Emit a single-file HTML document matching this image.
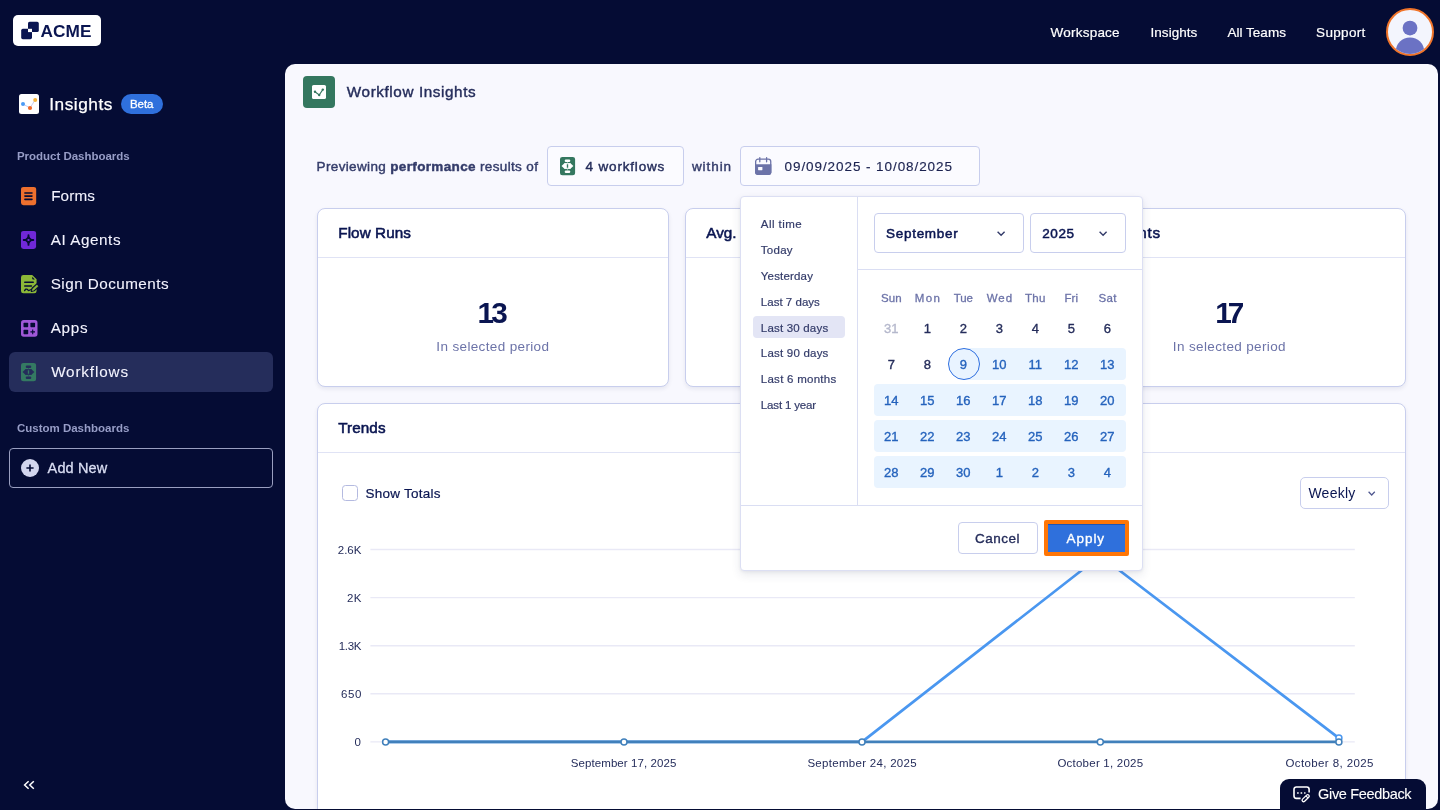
<!DOCTYPE html>
<html lang="en"><head><meta charset="utf-8"><title>Workflow Insights</title>
<style>
*{box-sizing:border-box;margin:0;padding:0}
html,body{width:1440px;height:810px;overflow:hidden;background:#050c34;font-family:"Liberation Sans",sans-serif}
.a{position:absolute}
.t{position:absolute;white-space:nowrap}
.card{position:absolute;background:#fff;border:1px solid #c8ceed;border-radius:8px;box-shadow:0 2px 4px rgba(10,21,81,.08)}
.hl{position:absolute;left:874px;width:252px;height:32px;background:#e9f4ff;border-radius:4px}
.box{position:absolute;border:1px solid #c8ceed;border-radius:4px;background:#fff}
svg{position:absolute;overflow:visible}
</style></head><body>
<div class="a" style="left:0;top:0;width:1440px;height:810px;will-change:transform">
<div class="a" style="left:13px;top:15px;width:88px;height:31px;background:#fff;border-radius:5px"></div>
<svg style="left:0;top:0" width="120" height="60"><rect x="28" y="21.8" width="10.8" height="10.3" rx="1.6" fill="#0a1551"/><rect x="21.2" y="28.8" width="10.8" height="10.4" rx="1.6" fill="#0a1551"/><rect x="28" y="28.8" width="4" height="3.3" fill="#fff"/></svg>
<span class="t" style="left:40.44px;top:20.50px;font-size:17.25px;line-height:21px;font-weight:700;color:#0a1551;letter-spacing:0.088px;">ACME</span>
<span class="t" style="left:1050.62px;top:24.50px;font-size:13.5px;line-height:16px;font-weight:400;color:#fff;-webkit-text-stroke:0.2px #fff;letter-spacing:0.212px;">Workspace</span>
<span class="t" style="left:1150.53px;top:24.50px;font-size:13.5px;line-height:16px;font-weight:400;color:#fff;-webkit-text-stroke:0.2px #fff;letter-spacing:0.036px;">Insights</span>
<span class="t" style="left:1227.53px;top:24.50px;font-size:13.5px;line-height:16px;font-weight:400;color:#fff;-webkit-text-stroke:0.2px #fff;letter-spacing:0.012px;">All Teams</span>
<span class="t" style="left:1316.12px;top:24.50px;font-size:13.5px;line-height:16px;font-weight:400;color:#fff;-webkit-text-stroke:0.2px #fff;letter-spacing:0.314px;">Support</span>
<svg style="left:1386px;top:8px" width="48" height="48" viewBox="0 0 48 48"><defs><clipPath id="av"><circle cx="24" cy="24" r="22"/></clipPath></defs><circle cx="24" cy="24" r="23" fill="#f3f5fd" stroke="#f0742a" stroke-width="2"/><g clip-path="url(#av)" fill="#6b72c4"><circle cx="24" cy="20.1" r="7.4"/><circle cx="24" cy="43.6" r="14.2"/></g></svg>
<svg style="left:19px;top:94px" width="20" height="20" viewBox="0 0 20 20"><rect width="20" height="20" rx="2.5" fill="#fff"/><path d="M4 10 L11 14 L16 6" stroke="#c9cdf0" stroke-width="1" fill="none"/><circle cx="4" cy="10" r="2" fill="#4a9bf5"/><circle cx="11" cy="14" r="2.1" fill="#f06a2b"/><circle cx="16.2" cy="6" r="2" fill="#f5b43a"/></svg>
<span class="t" style="left:49.14px;top:93.50px;font-size:17.25px;line-height:21px;font-weight:400;color:#fff;-webkit-text-stroke:0.25px #fff;letter-spacing:0.558px;">Insights</span>
<div class="a" style="left:121px;top:94px;width:41.5px;height:20px;border-radius:10px;background:#2f70dc"></div>
<span class="t" style="left:130.03px;top:97.00px;font-size:11.5px;line-height:14px;font-weight:400;color:#fff;-webkit-text-stroke:0.3px #fff;letter-spacing:-0.077px;">Beta</span>
<span class="t" style="left:16.93px;top:149.00px;font-size:11.5px;line-height:14px;font-weight:700;color:#979dc6;letter-spacing:-0.022px;">Product Dashboards</span>
<div class="a" style="left:9px;top:352px;width:264px;height:40px;border-radius:6px;background:#252d5b"></div>
<svg style="left:21.1px;top:186.9px" width="15.2" height="18.2" viewBox="0 0 15.2 18.2"><rect width="15.2" height="18.2" rx="2.5" fill="#ee702e"/><g stroke="#050c34" stroke-width="1.6" stroke-linecap="round"><path d="M3.9 5.95h7.1M3.9 9.1h7.1M3.9 12.35h7.1"/></g></svg>
<svg style="left:21.1px;top:231px" width="15.1" height="18.1" viewBox="0 0 15.1 18.1"><rect width="15.1" height="18.1" rx="2.5" fill="#7028d8"/><g stroke="#050c34" stroke-width="1.9" stroke-linecap="round"><path d="M7.5 4.1v9.8M2.7 9h9.6"/></g><path d="M7.5 5.9 Q8.6 7.9 10.6 9 Q8.6 10.1 7.5 12.1 Q6.4 10.1 4.4 9 Q6.4 7.9 7.5 5.9Z" fill="#050c34" stroke="#050c34" stroke-width="1.6" stroke-linejoin="round"/><rect x="6.55" y="8.05" width="1.9" height="1.9" fill="#7028d8"/></svg>
<svg style="left:20.9px;top:274.8px" width="18" height="18.3" viewBox="0 0 18 18.3"><path d="M2.4 0 H11.2 L15.6 4.3 V15.9 A2.4 2.4 0 0 1 13.2 18.3 H2.4 A2.4 2.4 0 0 1 0 15.9 V2.4 A2.4 2.4 0 0 1 2.4 0Z" fill="#8cb838"/><path d="M11.2 1.7 V3.4 A1 1 0 0 0 12.2 4.4 H13.9Z" fill="#050c34"/><g stroke="#050c34" stroke-width="1.6" fill="none" stroke-linecap="round"><path d="M3.8 7.2h8.4M3.8 11h6.6"/><path d="M3.6 15.6 c1 -1.4 1.8 -1.9 2.6 -1.3 s0.9 1.6 1.9 1.2 s1.3 -1 2.2 -0.8" stroke-width="1.3"/></g><path d="M10.4 16.4 L11.2 13.3 L15.9 9 L18 11.3 L13.3 15.6Z" fill="#050c34" stroke="#050c34" stroke-width="1.4" stroke-linejoin="round"/><path d="M11.2 15.7 L11.8 13.8 L15.9 10 L17 11.3 L12.9 15.1Z" fill="#8cb838" stroke="#8cb838" stroke-width=".6" stroke-linejoin="round"/></svg>
<svg style="left:20.5px;top:319.5px" width="16.5" height="16.8" viewBox="0 0 16.5 16.8"><rect width="16.5" height="16.8" rx="2.7" fill="#a058d8"/><g fill="#050c34"><rect x="2.5" y="2.8" width="4.7" height="4.5" rx=".7"/><rect x="9.4" y="2.8" width="4.7" height="4.5" rx=".7"/><rect x="2.5" y="9.7" width="4.7" height="4.5" rx=".7"/></g><path d="M11.7 9.6v4.6M9.4 11.9h4.6" stroke="#050c34" stroke-width="1.1"/></svg>
<svg style="left:21.2px;top:362.9px" width="15.1" height="18.2" viewBox="0 0 15.1 18.2"><rect width="15.1" height="18.2" rx="2.5" fill="#347a62"/><g fill="#252d5b"><rect x="4.7" y="2.6" width="5.6" height="2.5" rx="1.25"/><rect x="4.7" y="13.4" width="5.6" height="2.5" rx="1.25"/><path d="M1.5 9 L4.4 6.2 H6.8 V11.8 H4.4Z"/><path d="M13.4 9 L10.5 6.2 H8.2 V11.8 H10.5Z"/><path d="M4.4 6.75H10.5M4.4 11.25H10.5" stroke="#252d5b" stroke-width="1.1"/><rect x="7.2" y="5" width=".6" height="1.3" opacity=".7"/><rect x="7.2" y="11.8" width=".6" height="1.6" opacity=".7"/></g></svg>
<span class="t" style="left:51.14px;top:186.50px;font-size:15.25px;line-height:18px;font-weight:400;color:#f3f3fe;-webkit-text-stroke:0.1px #f3f3fe;letter-spacing:0.125px;">Forms</span>
<span class="t" style="left:50.74px;top:230.50px;font-size:15.25px;line-height:18px;font-weight:400;color:#f3f3fe;-webkit-text-stroke:0.1px #f3f3fe;letter-spacing:0.565px;">AI Agents</span>
<span class="t" style="left:50.74px;top:274.50px;font-size:15.25px;line-height:18px;font-weight:400;color:#f3f3fe;-webkit-text-stroke:0.1px #f3f3fe;letter-spacing:0.456px;">Sign Documents</span>
<span class="t" style="left:50.74px;top:318.50px;font-size:15.25px;line-height:18px;font-weight:400;color:#f3f3fe;-webkit-text-stroke:0.1px #f3f3fe;letter-spacing:0.718px;">Apps</span>
<span class="t" style="left:51.14px;top:362.50px;font-size:15.25px;line-height:18px;font-weight:400;color:#f3f3fe;-webkit-text-stroke:0.1px #f3f3fe;letter-spacing:0.857px;">Workflows</span>
<span class="t" style="left:16.93px;top:421.00px;font-size:11.5px;line-height:14px;font-weight:700;color:#979dc6;">Custom Dashboards</span>
<div class="a" style="left:9px;top:448px;width:264px;height:40px;border-radius:4px;border:1px solid #9a9fc0"></div>
<svg style="left:21px;top:459px" width="18" height="18" viewBox="0 0 18 18"><circle cx="9" cy="9" r="9" fill="#d3d6ee"/><path d="M9 5.4v7.2M5.4 9h7.2" stroke="#050c34" stroke-width="1.6"/></svg>
<span class="t" style="left:47.57px;top:459.50px;font-size:14.5px;line-height:17px;font-weight:400;color:#dadef3;-webkit-text-stroke:0.3px #dadef3;letter-spacing:0.143px;">Add New</span>
<svg style="left:23px;top:780px" width="12" height="10" viewBox="0 0 12 10"><path d="M5.6 1.2 L1.6 5 L5.6 8.8 M10.8 1.2 L6.8 5 L10.8 8.8" stroke="#fff" stroke-width="1.5" fill="none"/></svg>
<div class="a" style="left:285px;top:64px;width:1153px;height:744.5px;border-radius:10px;background:#f8f8fe;overflow:hidden">
<div class="a" style="left:-285px;top:-64px;width:1440px;height:810px">
<div class="a" style="left:303px;top:76px;width:32px;height:32px;border-radius:4px;background:#34775f"></div>
<svg style="left:312px;top:85px" width="14" height="14" viewBox="0 0 14 14"><rect width="14" height="14" rx="1.6" fill="#fff"/><path d="M3 6.8 L7.2 10 L10.8 4.6" stroke="#34775f" stroke-width="1.1" fill="none"/><circle cx="3" cy="6.8" r="1.2" fill="#34775f"/><circle cx="7.2" cy="10" r="1.2" fill="#34775f"/><circle cx="10.8" cy="4.6" r="1.2" fill="#34775f"/></svg>
<span class="t" style="left:346.84px;top:82.50px;font-size:15.25px;line-height:18px;font-weight:400;color:#252d5b;-webkit-text-stroke:0.4px #252d5b;letter-spacing:0.600px;">Workflow Insights</span>
<span class="t" style="left:316.62px;top:158.50px;font-size:13.5px;line-height:16px;font-weight:400;color:#343c6a;-webkit-text-stroke:0.42px #343c6a;letter-spacing:0.350px;">Previewing <b>performance</b> results of</span>
<div class="box" style="left:547px;top:146px;width:137px;height:40px;background:#fbfbff"></div>
<svg style="left:560.3px;top:156.9px" width="15.1" height="18.2" viewBox="0 0 15.1 18.2"><rect width="15.1" height="18.2" rx="2.5" fill="#34775f"/><g fill="#ffffff"><rect x="4.7" y="2.6" width="5.6" height="2.5" rx="1.25"/><rect x="4.7" y="13.4" width="5.6" height="2.5" rx="1.25"/><path d="M1.5 9 L4.4 6.2 H6.8 V11.8 H4.4Z"/><path d="M13.4 9 L10.5 6.2 H8.2 V11.8 H10.5Z"/><path d="M4.4 6.75H10.5M4.4 11.25H10.5" stroke="#ffffff" stroke-width="1.1"/><rect x="7.2" y="5" width=".6" height="1.3" opacity=".7"/><rect x="7.2" y="11.8" width=".6" height="1.6" opacity=".7"/></g></svg>
<span class="t" style="left:585.62px;top:158.50px;font-size:13.5px;line-height:16px;font-weight:400;color:#252d5b;-webkit-text-stroke:0.42px #252d5b;letter-spacing:0.815px;">4 workflows</span>
<span class="t" style="left:691.93px;top:158.50px;font-size:13.5px;line-height:16px;font-weight:400;color:#343c6a;-webkit-text-stroke:0.42px #343c6a;letter-spacing:0.933px;">within</span>
<div class="box" style="left:740px;top:146px;width:240px;height:40px;background:#fbfbff"></div>
<svg style="left:754.8px;top:157px" width="16.4" height="18" viewBox="0 0 16.4 18"><rect x="0.65" y="2.15" width="15.1" height="15.2" rx="2.4" fill="#fbfbff" stroke="#6c73a8" stroke-width="1.3"/><path d="M0 7.2 H16.4 V15.6 A2.4 2.4 0 0 1 14 18 H2.4 A2.4 2.4 0 0 1 0 15.6Z" fill="#6c73a8"/><path d="M4.8 .6v4.2M11.6 .6v4.2" stroke="#6c73a8" stroke-width="1.3" stroke-linecap="round"/><rect x="3.1" y="10" width="4.3" height="3.2" rx=".4" fill="#fbfbff"/></svg>
<span class="t" style="left:784.53px;top:158.50px;font-size:13.5px;line-height:16px;font-weight:400;color:#1b2250;-webkit-text-stroke:0.15px #1b2250;letter-spacing:0.925px;">09/09/2025 - 10/08/2025</span>
<div class="card" style="left:317px;top:208px;width:352.33px;height:179px"><div class="a" style="left:0;right:0;top:48px;height:1px;background:#e0e3f5"></div></div>
<div class="card" style="left:685.33px;top:208px;width:352.33px;height:179px"><div class="a" style="left:0;right:0;top:48px;height:1px;background:#e0e3f5"></div></div>
<div class="card" style="left:1053.67px;top:208px;width:352.33px;height:179px"><div class="a" style="left:0;right:0;top:48px;height:1px;background:#e0e3f5"></div></div>
<span class="t" style="left:338.24px;top:223.50px;font-size:15.25px;line-height:18px;font-weight:400;color:#0a1551;-webkit-text-stroke:0.55px #0a1551;letter-spacing:0.084px;">Flow Runs</span>
<span class="t" style="left:706.24px;top:223.50px;font-size:15.25px;line-height:18px;font-weight:400;color:#0a1551;-webkit-text-stroke:0.55px #0a1551;">Avg. Completion Time</span>
<span class="t" style="left:1065.24px;top:223.50px;font-size:15.25px;line-height:18px;font-weight:400;color:#0a1551;-webkit-text-stroke:0.55px #0a1551;letter-spacing:0.751px;">Assignments</span>
<span class="t" style="left:477.51px;top:294.50px;font-size:29.75px;line-height:36px;font-weight:700;color:#0a1551;letter-spacing:-2.674px;">13</span>
<span class="t" style="left:818.61px;top:297.00px;font-size:27.75px;line-height:33px;font-weight:700;color:#0a1551;">2m 14s</span>
<span class="t" style="left:1215.31px;top:294.50px;font-size:29.75px;line-height:36px;font-weight:700;color:#0a1551;letter-spacing:-4.074px;">17</span>
<span class="t" style="left:436.32px;top:338.50px;font-size:13.5px;line-height:16px;font-weight:400;color:#6c73a8;letter-spacing:0.359px;">In selected period</span>
<span class="t" style="left:804.33px;top:338.50px;font-size:13.5px;line-height:16px;font-weight:400;color:#6c73a8;letter-spacing:0.359px;">In selected period</span>
<span class="t" style="left:1172.83px;top:338.50px;font-size:13.5px;line-height:16px;font-weight:400;color:#6c73a8;letter-spacing:0.365px;">In selected period</span>
<div class="card" style="left:317px;top:403px;width:1089px;height:460px"><div class="a" style="left:0;right:0;top:48px;height:1px;background:#e0e3f5"></div></div>
<span class="t" style="left:338.24px;top:418.50px;font-size:15.25px;line-height:18px;font-weight:400;color:#0a1551;-webkit-text-stroke:0.55px #0a1551;letter-spacing:0.083px;">Trends</span>
<div class="a" style="left:342px;top:484.5px;width:16px;height:16px;border:1px solid #b4bae0;border-radius:3.5px;background:#fff"></div>
<span class="t" style="left:365.43px;top:485.50px;font-size:13.5px;line-height:16px;font-weight:400;color:#0a1551;-webkit-text-stroke:0.2px #0a1551;letter-spacing:0.253px;">Show Totals</span>
<div class="box" style="left:1299.5px;top:477px;width:89.5px;height:32px;border-radius:5px"></div>
<span class="t" style="left:1308.40px;top:484.50px;font-size:14.0px;line-height:17px;font-weight:400;color:#0a1551;letter-spacing:0.247px;">Weekly</span>
<svg style="left:1368.4px;top:491.3px" width="7.4" height="5" viewBox="0 0 7.4 5"><path d="M0.6 0.8 L3.7 4 L6.8 0.8" stroke="#4f578f" stroke-width="1.25" fill="none"/></svg>
<svg style="left:0;top:0" width="1440" height="810"><path d="M370.4 549.5H1354.8" stroke="#e9e9f6" stroke-width="1.4"/><path d="M370.4 597.6H1354.8" stroke="#e9e9f6" stroke-width="1.4"/><path d="M370.4 645.7H1354.8" stroke="#e9e9f6" stroke-width="1.4"/><path d="M370.4 693.8H1354.8" stroke="#e9e9f6" stroke-width="1.4"/><path d="M370.4 741.9H1354.8" stroke="#e9e9f6" stroke-width="1.4"/><path d="M385.6 741.9 L862.0 741.9 L1100.3 555.8 L1338.9 738.1" stroke="#4a97f0" stroke-width="2.7" fill="none" stroke-linejoin="round"/><path d="M385.6 741.9 H1338.9" stroke="#4180bb" stroke-width="2.8" fill="none"/><circle cx="1338.9" cy="738.1" r="3" fill="#fff" stroke="#4a97f0" stroke-width="1.5"/><circle cx="385.6" cy="741.9" r="3" fill="#fff" stroke="#4180bb" stroke-width="1.5"/><circle cx="624.0" cy="741.9" r="3" fill="#fff" stroke="#4180bb" stroke-width="1.5"/><circle cx="862.0" cy="741.9" r="3" fill="#fff" stroke="#4180bb" stroke-width="1.5"/><circle cx="1100.3" cy="741.9" r="3" fill="#fff" stroke="#4180bb" stroke-width="1.5"/><circle cx="1338.9" cy="741.9" r="3" fill="#fff" stroke="#4180bb" stroke-width="1.5"/></svg>
<span class="t" style="left:337.73px;top:543.00px;font-size:11.5px;line-height:14px;font-weight:400;color:#252d5b;letter-spacing:0.023px;">2.6K</span>
<span class="t" style="left:347.03px;top:591.00px;font-size:11.5px;line-height:14px;font-weight:400;color:#252d5b;letter-spacing:0.362px;">2K</span>
<span class="t" style="left:338.73px;top:639.00px;font-size:11.5px;line-height:14px;font-weight:400;color:#252d5b;letter-spacing:-0.311px;">1.3K</span>
<span class="t" style="left:340.93px;top:687.00px;font-size:11.5px;line-height:14px;font-weight:400;color:#252d5b;letter-spacing:0.676px;">650</span>
<span class="t" style="left:354.62px;top:735.00px;font-size:11.5px;line-height:14px;font-weight:400;color:#252d5b;">0</span>
<span class="t" style="left:570.72px;top:756.00px;font-size:11.5px;line-height:14px;font-weight:400;color:#252d5b;letter-spacing:0.089px;">September 17, 2025</span>
<span class="t" style="left:807.42px;top:756.00px;font-size:11.5px;line-height:14px;font-weight:400;color:#252d5b;letter-spacing:0.295px;">September 24, 2025</span>
<span class="t" style="left:1057.42px;top:756.00px;font-size:11.5px;line-height:14px;font-weight:400;color:#252d5b;letter-spacing:0.233px;">October 1, 2025</span>
<span class="t" style="left:1285.42px;top:756.00px;font-size:11.5px;line-height:14px;font-weight:400;color:#252d5b;letter-spacing:0.397px;">October 8, 2025</span>
<div class="a" style="left:740px;top:196px;width:403px;height:374.8px;background:#fff;border:1px solid #dcdff3;border-radius:4px;box-shadow:0 4px 10px rgba(37,45,91,.10),0 1px 3px rgba(37,45,91,.06)"></div>
<div class="a" style="left:857px;top:197px;width:1px;height:308.5px;background:#dadef3"></div>
<div class="a" style="left:858px;top:268.7px;width:283.5px;height:1px;background:#dadef3"></div>
<div class="a" style="left:741px;top:505px;width:401px;height:1px;background:#dadef3"></div>
<div class="a" style="left:753px;top:316.2px;width:92px;height:21.8px;border-radius:4px;background:#e3e5f5"></div>
<span class="t" style="left:760.82px;top:217.00px;font-size:11.5px;line-height:14px;font-weight:400;color:#343c6a;-webkit-text-stroke:0.2px #343c6a;letter-spacing:0.434px;">All time</span>
<span class="t" style="left:760.82px;top:243.00px;font-size:11.5px;line-height:14px;font-weight:400;color:#343c6a;-webkit-text-stroke:0.2px #343c6a;letter-spacing:0.263px;">Today</span>
<span class="t" style="left:760.82px;top:269.00px;font-size:11.5px;line-height:14px;font-weight:400;color:#343c6a;-webkit-text-stroke:0.2px #343c6a;letter-spacing:0.176px;">Yesterday</span>
<span class="t" style="left:760.82px;top:295.00px;font-size:11.5px;line-height:14px;font-weight:400;color:#343c6a;-webkit-text-stroke:0.2px #343c6a;letter-spacing:0.021px;">Last 7 days</span>
<span class="t" style="left:760.82px;top:321.00px;font-size:11.5px;line-height:14px;font-weight:400;color:#343c6a;-webkit-text-stroke:0.2px #343c6a;letter-spacing:0.193px;">Last 30 days</span>
<span class="t" style="left:760.82px;top:346.00px;font-size:11.5px;line-height:14px;font-weight:400;color:#343c6a;-webkit-text-stroke:0.2px #343c6a;letter-spacing:0.211px;">Last 90 days</span>
<span class="t" style="left:760.82px;top:372.00px;font-size:11.5px;line-height:14px;font-weight:400;color:#343c6a;-webkit-text-stroke:0.2px #343c6a;letter-spacing:0.259px;">Last 6 months</span>
<span class="t" style="left:760.82px;top:398.00px;font-size:11.5px;line-height:14px;font-weight:400;color:#343c6a;-webkit-text-stroke:0.2px #343c6a;letter-spacing:-0.157px;">Last 1 year</span>
<div class="box" style="left:874px;top:213px;width:150px;height:40px"></div>
<div class="box" style="left:1030px;top:213px;width:96px;height:40px"></div>
<span class="t" style="left:886.12px;top:225.50px;font-size:13.5px;line-height:16px;font-weight:400;color:#0a1551;-webkit-text-stroke:0.5px #0a1551;letter-spacing:0.692px;">September</span>
<span class="t" style="left:1042.23px;top:225.50px;font-size:13.5px;line-height:16px;font-weight:400;color:#0a1551;-webkit-text-stroke:0.5px #0a1551;letter-spacing:0.611px;">2025</span>
<svg style="left:996.9px;top:231px" width="8.2" height="5.2" viewBox="0 0 8.2 5.2"><path d="M0.6 0.8 L4.1 4.3 L7.6 0.8" stroke="#343c6a" stroke-width="1.4" fill="none"/></svg>
<svg style="left:1099px;top:231px" width="8.2" height="5.2" viewBox="0 0 8.2 5.2"><path d="M0.6 0.8 L4.1 4.3 L7.6 0.8" stroke="#343c6a" stroke-width="1.4" fill="none"/></svg>
<span class="t" style="left:880.92px;top:291.00px;font-size:11.5px;line-height:14px;font-weight:400;color:#6c73a8;-webkit-text-stroke:0.3px #6c73a8;letter-spacing:0.086px;">Sun</span>
<span class="t" style="left:914.82px;top:291.00px;font-size:11.5px;line-height:14px;font-weight:400;color:#6c73a8;-webkit-text-stroke:0.3px #6c73a8;letter-spacing:1.333px;">Mon</span>
<span class="t" style="left:953.72px;top:291.00px;font-size:11.5px;line-height:14px;font-weight:400;color:#6c73a8;-webkit-text-stroke:0.3px #6c73a8;letter-spacing:-0.125px;">Tue</span>
<span class="t" style="left:986.72px;top:291.00px;font-size:11.5px;line-height:14px;font-weight:400;color:#6c73a8;-webkit-text-stroke:0.3px #6c73a8;letter-spacing:0.993px;">Wed</span>
<span class="t" style="left:1024.92px;top:291.00px;font-size:11.5px;line-height:14px;font-weight:400;color:#6c73a8;-webkit-text-stroke:0.3px #6c73a8;letter-spacing:0.306px;">Thu</span>
<span class="t" style="left:1064.42px;top:291.00px;font-size:11.5px;line-height:14px;font-weight:400;color:#6c73a8;-webkit-text-stroke:0.3px #6c73a8;letter-spacing:0.159px;">Fri</span>
<span class="t" style="left:1098.42px;top:291.00px;font-size:11.5px;line-height:14px;font-weight:400;color:#6c73a8;-webkit-text-stroke:0.3px #6c73a8;letter-spacing:0.387px;">Sat</span>
<div class="hl" style="left:962px;width:164px;top:348px"></div>
<div class="hl" style="top:384px"></div><div class="hl" style="top:420px"></div><div class="hl" style="top:456px"></div>
<div class="a" style="left:948px;top:348px;width:32px;height:32px;border-radius:16px;background:#e9f4ff;border:1px solid #2e6fe0"></div>
<span class="t" style="left:871.35px;top:320.50px;font-size:13.0px;line-height:16px;font-weight:400;color:#b5b8cc;-webkit-text-stroke:0.35px #b5b8cc;width:40px;text-align:center;">31</span>
<span class="t" style="left:907.35px;top:320.50px;font-size:13.0px;line-height:16px;font-weight:400;color:#252d5b;-webkit-text-stroke:0.35px #252d5b;width:40px;text-align:center;">1</span>
<span class="t" style="left:943.35px;top:320.50px;font-size:13.0px;line-height:16px;font-weight:400;color:#252d5b;-webkit-text-stroke:0.35px #252d5b;width:40px;text-align:center;">2</span>
<span class="t" style="left:979.35px;top:320.50px;font-size:13.0px;line-height:16px;font-weight:400;color:#252d5b;-webkit-text-stroke:0.35px #252d5b;width:40px;text-align:center;">3</span>
<span class="t" style="left:1015.35px;top:320.50px;font-size:13.0px;line-height:16px;font-weight:400;color:#252d5b;-webkit-text-stroke:0.35px #252d5b;width:40px;text-align:center;">4</span>
<span class="t" style="left:1051.35px;top:320.50px;font-size:13.0px;line-height:16px;font-weight:400;color:#252d5b;-webkit-text-stroke:0.35px #252d5b;width:40px;text-align:center;">5</span>
<span class="t" style="left:1087.35px;top:320.50px;font-size:13.0px;line-height:16px;font-weight:400;color:#252d5b;-webkit-text-stroke:0.35px #252d5b;width:40px;text-align:center;">6</span>
<span class="t" style="left:871.35px;top:356.50px;font-size:13.0px;line-height:16px;font-weight:400;color:#252d5b;-webkit-text-stroke:0.35px #252d5b;width:40px;text-align:center;">7</span>
<span class="t" style="left:907.35px;top:356.50px;font-size:13.0px;line-height:16px;font-weight:400;color:#252d5b;-webkit-text-stroke:0.35px #252d5b;width:40px;text-align:center;">8</span>
<span class="t" style="left:943.35px;top:356.50px;font-size:13.0px;line-height:16px;font-weight:400;color:#2563bd;-webkit-text-stroke:0.35px #2563bd;width:40px;text-align:center;">9</span>
<span class="t" style="left:979.35px;top:356.50px;font-size:13.0px;line-height:16px;font-weight:400;color:#2563bd;-webkit-text-stroke:0.35px #2563bd;width:40px;text-align:center;">10</span>
<span class="t" style="left:1015.35px;top:356.50px;font-size:13.0px;line-height:16px;font-weight:400;color:#2563bd;-webkit-text-stroke:0.35px #2563bd;width:40px;text-align:center;">11</span>
<span class="t" style="left:1051.35px;top:356.50px;font-size:13.0px;line-height:16px;font-weight:400;color:#2563bd;-webkit-text-stroke:0.35px #2563bd;width:40px;text-align:center;">12</span>
<span class="t" style="left:1087.35px;top:356.50px;font-size:13.0px;line-height:16px;font-weight:400;color:#2563bd;-webkit-text-stroke:0.35px #2563bd;width:40px;text-align:center;">13</span>
<span class="t" style="left:871.35px;top:392.50px;font-size:13.0px;line-height:16px;font-weight:400;color:#2563bd;-webkit-text-stroke:0.35px #2563bd;width:40px;text-align:center;">14</span>
<span class="t" style="left:907.35px;top:392.50px;font-size:13.0px;line-height:16px;font-weight:400;color:#2563bd;-webkit-text-stroke:0.35px #2563bd;width:40px;text-align:center;">15</span>
<span class="t" style="left:943.35px;top:392.50px;font-size:13.0px;line-height:16px;font-weight:400;color:#2563bd;-webkit-text-stroke:0.35px #2563bd;width:40px;text-align:center;">16</span>
<span class="t" style="left:979.35px;top:392.50px;font-size:13.0px;line-height:16px;font-weight:400;color:#2563bd;-webkit-text-stroke:0.35px #2563bd;width:40px;text-align:center;">17</span>
<span class="t" style="left:1015.35px;top:392.50px;font-size:13.0px;line-height:16px;font-weight:400;color:#2563bd;-webkit-text-stroke:0.35px #2563bd;width:40px;text-align:center;">18</span>
<span class="t" style="left:1051.35px;top:392.50px;font-size:13.0px;line-height:16px;font-weight:400;color:#2563bd;-webkit-text-stroke:0.35px #2563bd;width:40px;text-align:center;">19</span>
<span class="t" style="left:1087.35px;top:392.50px;font-size:13.0px;line-height:16px;font-weight:400;color:#2563bd;-webkit-text-stroke:0.35px #2563bd;width:40px;text-align:center;">20</span>
<span class="t" style="left:871.35px;top:428.50px;font-size:13.0px;line-height:16px;font-weight:400;color:#2563bd;-webkit-text-stroke:0.35px #2563bd;width:40px;text-align:center;">21</span>
<span class="t" style="left:907.35px;top:428.50px;font-size:13.0px;line-height:16px;font-weight:400;color:#2563bd;-webkit-text-stroke:0.35px #2563bd;width:40px;text-align:center;">22</span>
<span class="t" style="left:943.35px;top:428.50px;font-size:13.0px;line-height:16px;font-weight:400;color:#2563bd;-webkit-text-stroke:0.35px #2563bd;width:40px;text-align:center;">23</span>
<span class="t" style="left:979.35px;top:428.50px;font-size:13.0px;line-height:16px;font-weight:400;color:#2563bd;-webkit-text-stroke:0.35px #2563bd;width:40px;text-align:center;">24</span>
<span class="t" style="left:1015.35px;top:428.50px;font-size:13.0px;line-height:16px;font-weight:400;color:#2563bd;-webkit-text-stroke:0.35px #2563bd;width:40px;text-align:center;">25</span>
<span class="t" style="left:1051.35px;top:428.50px;font-size:13.0px;line-height:16px;font-weight:400;color:#2563bd;-webkit-text-stroke:0.35px #2563bd;width:40px;text-align:center;">26</span>
<span class="t" style="left:1087.35px;top:428.50px;font-size:13.0px;line-height:16px;font-weight:400;color:#2563bd;-webkit-text-stroke:0.35px #2563bd;width:40px;text-align:center;">27</span>
<span class="t" style="left:871.35px;top:464.50px;font-size:13.0px;line-height:16px;font-weight:400;color:#2563bd;-webkit-text-stroke:0.35px #2563bd;width:40px;text-align:center;">28</span>
<span class="t" style="left:907.35px;top:464.50px;font-size:13.0px;line-height:16px;font-weight:400;color:#2563bd;-webkit-text-stroke:0.35px #2563bd;width:40px;text-align:center;">29</span>
<span class="t" style="left:943.35px;top:464.50px;font-size:13.0px;line-height:16px;font-weight:400;color:#2563bd;-webkit-text-stroke:0.35px #2563bd;width:40px;text-align:center;">30</span>
<span class="t" style="left:979.35px;top:464.50px;font-size:13.0px;line-height:16px;font-weight:400;color:#2563bd;-webkit-text-stroke:0.35px #2563bd;width:40px;text-align:center;">1</span>
<span class="t" style="left:1015.35px;top:464.50px;font-size:13.0px;line-height:16px;font-weight:400;color:#2563bd;-webkit-text-stroke:0.35px #2563bd;width:40px;text-align:center;">2</span>
<span class="t" style="left:1051.35px;top:464.50px;font-size:13.0px;line-height:16px;font-weight:400;color:#2563bd;-webkit-text-stroke:0.35px #2563bd;width:40px;text-align:center;">3</span>
<span class="t" style="left:1087.35px;top:464.50px;font-size:13.0px;line-height:16px;font-weight:400;color:#2563bd;-webkit-text-stroke:0.35px #2563bd;width:40px;text-align:center;">4</span>
<div class="box" style="left:958px;top:522px;width:80px;height:32px"></div>
<span class="t" style="left:975.03px;top:530.50px;font-size:13.5px;line-height:16px;font-weight:400;color:#252d5b;-webkit-text-stroke:0.35px #252d5b;letter-spacing:0.490px;">Cancel</span>
<div class="a" style="left:1043.5px;top:520px;width:85.5px;height:35.5px;border:4px solid #ff7606;border-radius:2px;background:#2f70dc;box-shadow:inset 0 1px 0 #1f55b4"></div>
<span class="t" style="left:1066.53px;top:530.50px;font-size:13.5px;line-height:16px;font-weight:400;color:#fff;-webkit-text-stroke:0.35px #fff;letter-spacing:0.950px;">Apply</span>
</div></div>
<div class="a" style="left:1280px;top:779px;width:146px;height:40px;border-radius:9px;background:#050c34"></div>
<svg style="left:1293px;top:786px" width="18" height="17" viewBox="0 0 18 17"><path d="M16.1 6.6V3.3A2.3 2.3 0 0 0 13.8 1H3.3A2.3 2.3 0 0 0 1 3.3V10.1A2.3 2.3 0 0 0 3.3 12.4H7.6" stroke="#fff" stroke-width="1.6" fill="none"/><path d="M4.1 7h1.6M7.6 7h1.6M11.1 7h1.4" stroke="#fff" stroke-width="1.6"/><path d="M10.6 14.2L14.7 10.2" stroke="#fff" stroke-width="4.3" stroke-linecap="round"/><path d="M10.6 14.2L14.7 10.2" stroke="#050c34" stroke-width="1.7" stroke-linecap="round"/><path d="M12.9 9.9L14.9 11.9" stroke="#fff" stroke-width="1.1"/></svg>
<span class="t" style="left:1318.08px;top:785.50px;font-size:14.5px;line-height:17px;font-weight:400;color:#fff;-webkit-text-stroke:0.1px #fff;letter-spacing:-0.336px;">Give Feedback</span>
</div>
</body></html>
